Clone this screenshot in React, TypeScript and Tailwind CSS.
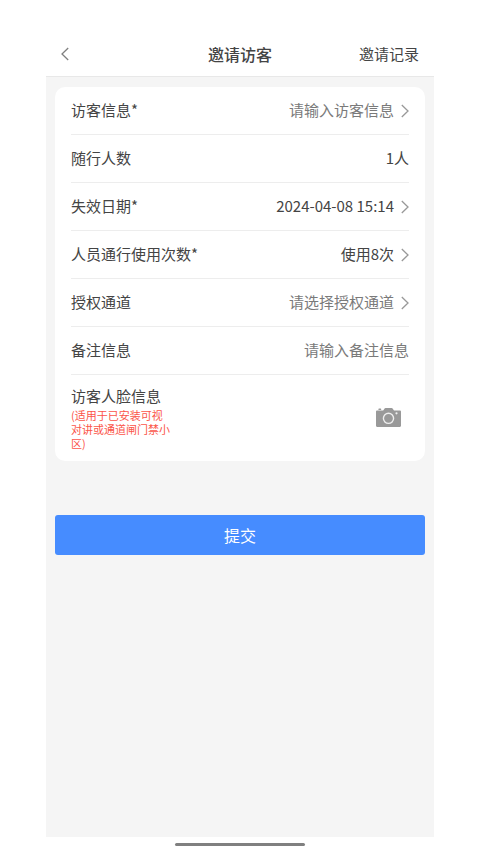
import { useState } from 'react'
import type { ReactNode } from 'react'

interface RowProps {
  id: string
  label: string
  children: ReactNode
}

function Row({ id, label, children }: RowProps) {
  return (
    <div className="flex h-12 items-center justify-between gap-3 border-b border-[#ededed]">
      <label htmlFor={id} className="shrink-0">{label}</label>
      {children}
    </div>
  )
}

function ChevronRight() {
  return (
    <svg width="8" height="14" viewBox="0 0 8 14" fill="none" className="shrink-0">
      <path d="M0.8 1L7 7L0.8 13" stroke="#999999" strokeWidth="1.3" />
    </svg>
  )
}

interface PickerProps {
  id: string
  value: string
  empty?: boolean
}

// 带右箭头的选择项
function Picker({ id, value, empty = false }: PickerProps) {
  return (
    <button id={id} type="button" className="flex cursor-pointer items-center gap-[7px]">
      <span className={empty ? 'text-[#7a7a7a]' : 'text-[#444444]'}>{value}</span>
      <ChevronRight />
    </button>
  )
}

function CameraIcon() {
  return (
    <svg width="25" height="19" viewBox="0 0 25 19" fill="none">
      <path
        d="M1.2 2.4H7.2L8.4 0.7C8.7 0.2 9 0 9.6 0H15.6C16.2 0 16.5 0.2 16.8 0.7L18 2.4H23.8C24.5 2.4 25 2.9 25 3.6V17.8C25 18.5 24.5 19 23.8 19H1.2C0.5 19 0 18.5 0 17.8V3.6C0 2.9 0.5 2.4 1.2 2.4Z"
        fill="#999999"
      />
      <rect x="2.4" y="0.6" width="2.8" height="1.4" rx="0.6" fill="#999999" />
      <circle cx="12.5" cy="10.3" r="5.1" stroke="#eeeeee" strokeWidth="1.4" />
      <circle cx="20.5" cy="5.3" r="1.1" fill="#eeeeee" />
    </svg>
  )
}

export default function App() {
  const [people, setPeople] = useState('1人')
  const [remark, setRemark] = useState('')

  return (
    <div className="flex min-h-screen flex-col bg-white px-[46px] pt-8 font-['Noto_Sans_CJK_SC',sans-serif] text-[15px] text-[#444444]">
      {/* 顶部导航 */}
      <header className="grid h-[45px] grid-cols-3 items-center border-b border-[#e8e8e8] px-[15px]">
        <button type="button" aria-label="返回" className="cursor-pointer justify-self-start">
          <svg width="8" height="14" viewBox="0 0 8 14" fill="none">
            <path d="M7.2 1L1 7L7.2 13" stroke="#808080" strokeWidth="1.3" />
          </svg>
        </button>
        <h1 className="text-center text-base font-medium">邀请访客</h1>
        <a href="#records" className="justify-self-end">邀请记录</a>
      </header>

      <main className="flex-1 bg-[#f5f5f5] px-[9px] pt-[10px]">
        <form onSubmit={e => e.preventDefault()}>
          <div className="rounded-[10px] bg-white px-4">
            <Row id="visitor" label="访客信息*">
              <Picker id="visitor" value="请输入访客信息" empty />
            </Row>
            <Row id="people" label="随行人数">
              <input
                id="people"
                value={people}
                onChange={e => setPeople(e.target.value)}
                className="min-w-0 flex-1 text-right outline-none"
              />
            </Row>
            <Row id="expire" label="失效日期*">
              <Picker id="expire" value="2024-04-08 15:14" />
            </Row>
            <Row id="times" label="人员通行使用次数*">
              <Picker id="times" value="使用8次" />
            </Row>
            <Row id="channel" label="授权通道">
              <Picker id="channel" value="请选择授权通道" empty />
            </Row>
            <Row id="remark" label="备注信息">
              <input
                id="remark"
                value={remark}
                placeholder="请输入备注信息"
                onChange={e => setRemark(e.target.value)}
                className="min-w-0 flex-1 text-right outline-none placeholder:text-[#7a7a7a]"
              />
            </Row>

            {/* 人脸照片 */}
            <div className="flex items-center justify-between pt-[9px] pb-[11px]">
              <label htmlFor="face">
                <span className="block leading-6">访客人脸信息</span>
                <span className="block w-[100px] text-[11px] leading-[14px] text-[#fb5549]">
                  (适用于已安装可视对讲或通道闸门禁小区)
                </span>
              </label>
              <button id="face" type="button" aria-label="拍照" className="mr-2 cursor-pointer">
                <CameraIcon />
              </button>
            </div>
          </div>

          <button
            type="submit"
            className="mt-[54px] h-10 w-full cursor-pointer rounded-[3px] bg-[#468cff] text-base text-white"
          >
            提交
          </button>
        </form>
      </main>

      {/* 底部手势条 */}
      <div className="flex h-[17px] items-start justify-center pt-[6px]">
        <div className="h-[3px] w-1/3 rounded-full bg-[#808080]" />
      </div>
    </div>
  )
}
